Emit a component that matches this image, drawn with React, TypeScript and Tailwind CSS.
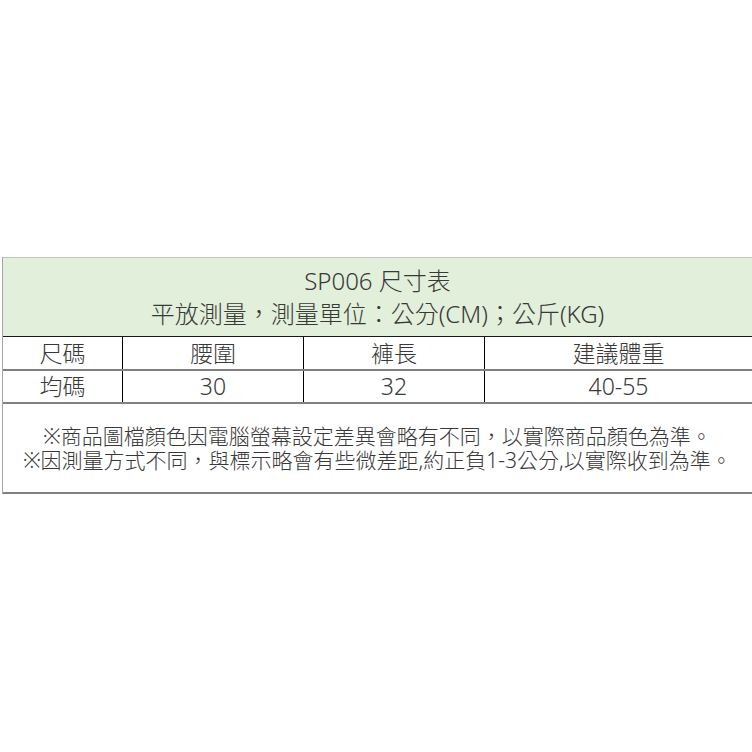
export default function App() {
  const font = {
    fontFamily: '"Noto Sans", "Noto Sans CJK TC", sans-serif',
  };

  const head = ["尺碼", "腰圍", "褲長", "建議體重"];
  const row = ["均碼", "30", "32", "40-55"];
  const widths = ["w-[120px]", "w-[181px]", "w-[181px]", "flex-1"];

  return (
    <div className="w-[752px] h-[752px] bg-white pt-[257px] pl-[2px] text-[#383838] font-light" style={font}>
      <div className="border-l border-[#a6a6a6]">
        {/* title */}
        <div className="border-t border-[#c4c4c4] bg-[#e2efda] h-[79px] flex flex-col items-center justify-center text-[24px] leading-[33px]">
          <div>SP006 尺寸表</div>
          <div>平放測量，測量單位：公分(CM)；公斤(KG)</div>
        </div>

        {/* size table */}
        <div className="border-t border-[#1a1a1a]">
          <div className="flex h-[34px] border-b-2 border-[#808080] text-[23px]">
            {head.map((h, i) => (
              <div
                key={h}
                className={`${widths[i]} flex items-center justify-center ${i < 3 ? "border-r border-black" : ""}`}
              >
                {h}
              </div>
            ))}
          </div>
          <div className="flex h-[33px] border-b-2 border-[#808080] text-[23px]">
            {row.map((c, i) => (
              <div
                key={c}
                className={`${widths[i]} flex items-center justify-center ${i < 3 ? "border-r border-black" : ""}`}
              >
                {c}
              </div>
            ))}
          </div>
        </div>

        {/* notes */}
        <div className="h-[90px] border-b-2 border-[#808080] flex flex-col items-center justify-center text-[21px] leading-[24px]">
          <div>※商品圖檔顏色因電腦螢幕設定差異會略有不同，以實際商品顏色為準。</div>
          <div>※因測量方式不同，與標示略會有些微差距,約正負1-3公分,以實際收到為準。</div>
        </div>
      </div>
    </div>
  );
}
